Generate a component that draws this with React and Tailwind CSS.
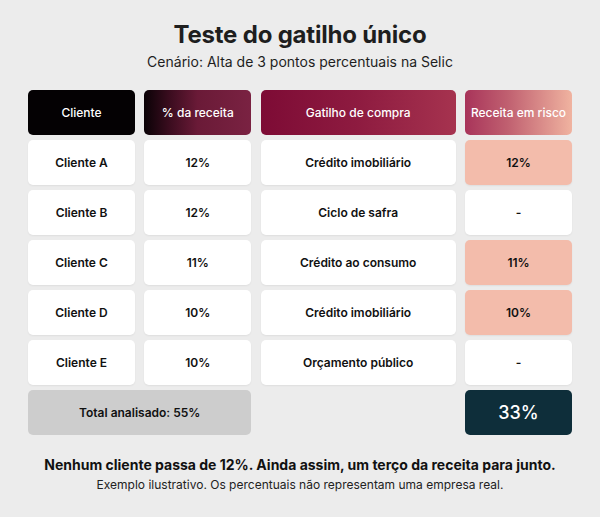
import { Fragment } from "react";

export default function App() {
  const rows = [
    { c: "Cliente A", p: "12%", g: "Crédito imobiliário", r: "12%" },
    { c: "Cliente B", p: "12%", g: "Ciclo de safra", r: "-" },
    { c: "Cliente C", p: "11%", g: "Crédito ao consumo", r: "11%" },
    { c: "Cliente D", p: "10%", g: "Crédito imobiliário", r: "10%" },
    { c: "Cliente E", p: "10%", g: "Orçamento público", r: "-" },
  ];
  const cell = "h-[45px] rounded-[5px] flex items-center justify-center text-[12px] font-semibold text-[#111] shadow-[0_1px_2px_rgba(0,0,0,0.06)]";
  const head = "h-[45px] rounded-[5px] flex items-center justify-center text-[12px] font-medium text-white";
  return (
    <div className="w-[600px] h-[517px] bg-[#ececec] flex flex-col items-center" style={{ fontFamily: "Inter, 'Noto Sans', sans-serif" }}>
      <h1 className="mt-[20px] text-[24px] leading-[30px] font-bold text-[#1e1e1e] tracking-[-0.2px]">Teste do gatilho único</h1>
      <p className="mt-[2px] text-[14px] leading-[20px] text-[#1e1e1e]">Cenário: Alta de 3 pontos percentuais na Selic</p>
      <div className="mt-[18px] grid grid-cols-[107px_107px_195px_107px] gap-x-[9.33px] gap-y-[5px]">
        <div className={head + " bg-[#040103]"}>Cliente</div>
        <div className={head + " bg-[linear-gradient(90deg,#0a0206_0%,#3d0d20_25%,#6a1a37_50%,#7a2242_100%)]"}>% da receita</div>
        <div className={head + " bg-[linear-gradient(90deg,#7d0b35_0%,#8e1b40_50%,#a6334f_100%)]"}>Gatilho de compra</div>
        <div className={head + " bg-[linear-gradient(90deg,#a8345a_0%,#c06070_40%,#f0b3a0_100%)]"}>Receita em risco</div>
        {rows.map((row) => (
          <Fragment key={row.c}>
            <div className={cell + " bg-white"}>{row.c}</div>
            <div className={cell + " bg-white font-medium"}>{row.p}</div>
            <div className={cell + " bg-white"}>{row.g}</div>
            <div className={cell + (row.r === "-" ? " bg-white" : " bg-[#f3bcab]")}>{row.r}</div>
          </Fragment>
        ))}
        <div className="col-span-2 h-[45px] rounded-[5px] bg-[#cdcdcd] flex items-center justify-center text-[12px] font-semibold text-[#111]">Total analisado: 55%</div>
        <div></div>
        <div className="h-[45px] rounded-[5px] bg-[#0e2e3a] flex items-center justify-center text-[18px] font-medium text-white">33%</div>
      </div>
      <p className="mt-[20px] text-[14px] leading-[20px] font-bold text-[#111]">Nenhum cliente passa de 12%. Ainda assim, um terço da receita para junto.</p>
      <p className="mt-[2px] text-[12px] leading-[16px] text-[#222]">Exemplo ilustrativo. Os percentuais não representam uma empresa real.</p>
    </div>
  );
}
